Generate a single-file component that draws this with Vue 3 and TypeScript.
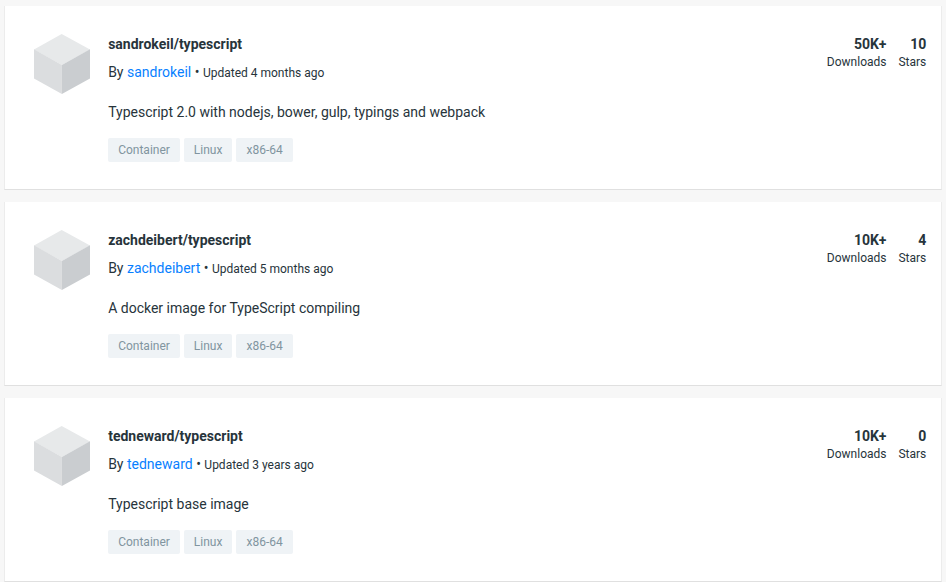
<script setup lang="ts">
interface Repo {
  owner: string
  updated: string
  description: string
  downloads: string
  stars: number
}

const repos: Repo[] = [
  { owner: 'sandrokeil', updated: '4 months ago', description: 'Typescript 2.0 with nodejs, bower, gulp, typings and webpack', downloads: '50K+', stars: 10 },
  { owner: 'zachdeibert', updated: '5 months ago', description: 'A docker image for TypeScript compiling', downloads: '10K+', stars: 4 },
  { owner: 'tedneward', updated: '3 years ago', description: 'Typescript base image', downloads: '10K+', stars: 0 },
]
const tags: string[] = ['Container', 'Linux', 'x86-64']
</script>

<template>
  <main class="results">
    <article v-for="repo in repos" :key="repo.owner" class="card">
      <svg class="logo" width="56" height="60" viewBox="0 0 56 60" aria-hidden="true">
        <path d="M27.7 0 56 15.4 27.9 31 0 15.4Z" fill="#e7e9ea" />
        <path d="M0 15.2 27.9 30.9V60L0 44.4Z" fill="#dbdddf" />
        <path d="M56 15.2 27.9 30.9V60L56 44.4Z" fill="#cacdd0" />
      </svg>
      <div class="body">
        <h2 class="name">{{ repo.owner }}/typescript</h2>
        <p class="byline">By <a class="owner">{{ repo.owner }}</a> • <span class="updated">Updated {{ repo.updated }}</span></p>
        <p class="description">{{ repo.description }}</p>
        <div class="tags">
          <span v-for="tag in tags" :key="tag" class="tag">{{ tag }}</span>
        </div>
      </div>
      <dl class="stats">
        <div class="stat"><dd>{{ repo.downloads }}</dd><dt>Downloads</dt></div>
        <div class="stat"><dd>{{ repo.stars }}</dd><dt>Stars</dt></div>
      </dl>
    </article>
  </main>
</template>

<style>
body { background: #f7f7f7; overflow: hidden; }
</style>

<style scoped>
.results {
  box-sizing: border-box;
  height: 582px;
  padding: 6px 4px 0;
  display: flex;
  flex-direction: column;
  gap: 12px;
  overflow: hidden;
  font-family: Roboto, sans-serif;
  font-size: 14px;
  color: #27343b;
}
.card {
  box-sizing: border-box;
  flex: none;
  height: 184px;
  display: flex;
  padding: 28px 14.7px 0 29px;
  background: #fff;
  border: 1px solid #ececec;
  border-top: 0;
  border-bottom-color: #e0e0e0;
}
.logo { flex: none; margin-right: 18.15px; }
.body { flex: 1; }
.name { margin: 0; font-size: 14px; line-height: 20px; font-weight: 700; }
.byline { margin: 8px 0 0; height: 20px; line-height: 20px; }
.owner { color: #087fff; }
.updated { font-size: 12px; }
.description { margin: 20px 0 0; line-height: 20px; }
.tags { display: flex; gap: 4px; margin-top: 16px; }
.tag {
  height: 24px;
  padding: 0 10px;
  border-radius: 2px;
  background: #eff3f6;
  color: #8195a0;
  font-size: 12px;
  line-height: 24px;
}
.stats { display: flex; gap: 12px; margin: 0; text-align: right; }
.stat dd { margin: 0; font-weight: 700; line-height: 20px; }
.stat dt { font-size: 12px; line-height: 16px; }
</style>
